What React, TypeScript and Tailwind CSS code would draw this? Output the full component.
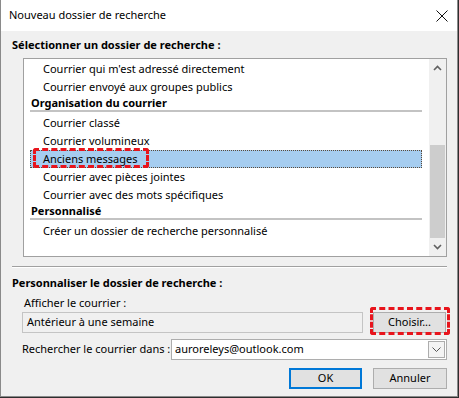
import React from 'react';

const font = "font-['Noto_Sans','Liberation_Sans',sans-serif]";

function Row({ label, selected }: { label: string; selected?: boolean }) {
  return (
    <div
      className={`relative ml-[6px] h-[18px] w-[392px] pl-[13px] flex items-center ${
        selected ? 'bg-[#a6cdf0] outline outline-1 outline-dotted outline-[#5a4a3a] -outline-offset-1' : ''
      }`}
    >
      {label}
      {selected && (
        <div className="absolute left-[3px] top-[-2px] h-[20px] w-[116px] rounded-[3px] border-[3px] border-dashed border-[#e8141c]" />
      )}
    </div>
  );
}

function Header({ label }: { label: string }) {
  return (
    <div className="ml-[6px] w-[392px] h-[18px]">
      <div className="h-[14px] pl-[1px] flex items-center font-bold">{label}</div>
      <div className="h-[2px] bg-[#c3c3c3]" />
    </div>
  );
}

export default function App() {
  return (
    <div className={`w-[459px] h-[398px] bg-[#2e2e2e] text-[11px] text-black whitespace-nowrap ${font}`}>
      <div className="w-[458px] h-[397px] border-l border-r border-b border-[#8a8a8a] bg-[#f0f0f0] flex flex-col">
        {/* title bar */}
        <div className="h-[31px] bg-white flex items-center justify-between pl-[8px] pr-[8px]">
          <span className="text-[11px]">Nouveau dossier de recherche</span>
          <svg width="12" height="12" viewBox="0 0 12 12" className="mr-[1px]">
            <path d="M0.5 0.5 L11.5 11.5 M11.5 0.5 L0.5 11.5" stroke="#111" strokeWidth="1" fill="none" />
          </svg>
        </div>

        <div className="pl-[11px] pt-[6px] h-[22px] leading-[16px] font-bold">Sélectionner un dossier de recherche :</div>

        {/* list box */}
        <div className="ml-[22px] mt-[5px] w-[424px] h-[199px] border border-[#a0a0a0] bg-white flex">
          <div className="flex-1 pt-[1px] overflow-hidden">
            <Row label="Courrier qui m'est adressé directement" />
            <Row label="Courrier envoyé aux groupes publics" />
            <Header label="Organisation du courrier" />
            <Row label="Courrier classé" />
            <Row label="Courrier volumineux" />
            <Row label="Anciens messages" selected />
            <Row label="Courrier avec pièces jointes" />
            <Row label="Courrier avec des mots spécifiques" />
            <Header label="Personnalisé" />
            <Row label="Créer un dossier de recherche personnalisé" />
          </div>
          <div className="w-[17px] bg-[#f0f0f0] flex flex-col">
            <div className="h-[17px] flex items-center justify-center">
              <svg width="9" height="6" viewBox="0 0 9 6">
                <path d="M1 5 L4.5 1.5 L8 5" stroke="#606060" strokeWidth="1.6" fill="none" />
              </svg>
            </div>
            <div className="h-[69px]" />
            <div className="h-[93px] mx-[1px] bg-[#cdcdcd]" />
            <div className="flex-1 flex items-center justify-center">
              <svg width="9" height="6" viewBox="0 0 9 6">
                <path d="M1 1 L4.5 4.5 L8 1" stroke="#606060" strokeWidth="1.6" fill="none" />
              </svg>
            </div>
          </div>
        </div>

        <div className="ml-[11px] mt-[9px] w-[435px] h-[2px] border-t border-[#a0a0a0] border-b border-b-white" />

        <div className="pl-[11px] mt-[7px] leading-[16px] font-bold">Personnaliser le dossier de recherche :</div>
        <div className="pl-[23px] mt-[4px] leading-[16px]">Afficher le courrier :</div>

        <div className="mt-[1px] pl-[21px] flex items-center gap-[10px]">
          <div className="w-[341px] h-[21px] border border-[#c4c4c4] bg-[#f0f0f0] pl-[4px] flex items-center">
            Antérieur à une semaine
          </div>
          <div className="relative">
            <button className="w-[73px] h-[21px] border border-[#adadad] bg-[#e1e1e1] flex items-center justify-center">
              Choisir...
            </button>
            <div className="absolute left-[-3px] top-[-5px] w-[80px] h-[28px] rounded-[3px] border-[3px] border-dashed border-[#e8141c]" />
          </div>
        </div>

        <div className="mt-[6px] pl-[21px] flex items-center">
          <span className="w-[149px]">Rechercher le courrier dans :</span>
          <div className="w-[276px] h-[21px] border border-[#adadad] bg-white flex items-center justify-between pl-[3px] pr-[1px]">
            <span>auroreleys@outlook.com</span>
            <div className="w-[17px] h-[17px] border border-[#adadad] bg-[#f4f4f4] flex items-center justify-center">
              <svg width="9" height="5" viewBox="0 0 9 5">
                <path d="M0.5 0.5 L4.5 4.5 L8.5 0.5" stroke="#555" strokeWidth="1" fill="none" />
              </svg>
            </div>
          </div>
        </div>

        <div className="mt-[8px] pl-[288px] flex gap-[11px]">
          <button className="w-[73px] h-[21px] border-2 border-[#0078d7] bg-[#e1e1e1] flex items-center justify-center">
            OK
          </button>
          <button className="w-[74px] h-[21px] border border-[#adadad] bg-[#e1e1e1] flex items-center justify-center">
            Annuler
          </button>
        </div>
      </div>
    </div>
  );
}
